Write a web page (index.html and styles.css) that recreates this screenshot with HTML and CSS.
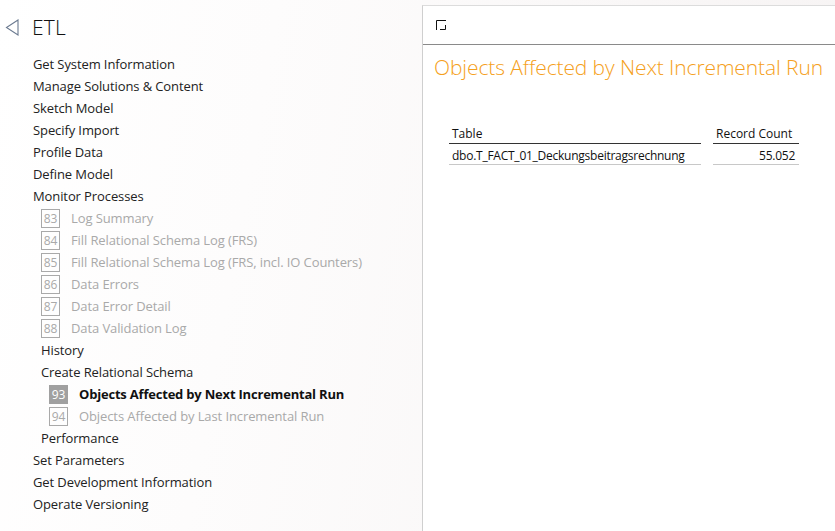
FILE: index.html
```html
<!DOCTYPE html>
<html>
<head>
<meta charset="utf-8">
<link rel="stylesheet" href="styles.css">
</head>
<body>
<div class="app">
  <nav class="side">
    <div class="head">
      <svg class="back" width="14" height="17" viewBox="0 0 14 17"><path d="M13 1 L1.5 8.5 L13 16 Z" fill="none" stroke="#6b7a90" stroke-width="1.1"/></svg>
      <span class="etl">ETL</span>
    </div>
    <ul class="menu">
      <li class="item">Get System Information</li>
      <li class="item">Manage Solutions &amp; Content</li>
      <li class="item">Sketch Model</li>
      <li class="item">Specify Import</li>
      <li class="item">Profile Data</li>
      <li class="item">Define Model</li>
      <li class="item">Monitor Processes</li>
      <li class="item num l1 dim"><span class="box">83</span>Log Summary</li>
      <li class="item num l1 dim"><span class="box">84</span>Fill Relational Schema Log (FRS)</li>
      <li class="item num l1 dim"><span class="box">85</span>Fill Relational Schema Log (FRS, incl. IO Counters)</li>
      <li class="item num l1 dim"><span class="box">86</span>Data Errors</li>
      <li class="item num l1 dim"><span class="box">87</span>Data Error Detail</li>
      <li class="item num l1 dim"><span class="box">88</span>Data Validation Log</li>
      <li class="item l1">History</li>
      <li class="item l1">Create Relational Schema</li>
      <li class="item num l2 active"><span class="box">93</span>Objects Affected by Next Incremental Run</li>
      <li class="item num l2 dim"><span class="box">94</span>Objects Affected by Last Incremental Run</li>
      <li class="item l1">Performance</li>
      <li class="item">Set Parameters</li>
      <li class="item">Get Development Information</li>
      <li class="item">Operate Versioning</li>
    </ul>
  </nav>
  <main class="panel">
    <div class="toolbar">
      <svg width="11" height="11" viewBox="0 0 11 11"><path d="M0.5 10 V0.5 H10 M4 9.5 H9.5 V5" fill="none" stroke="#111" stroke-width="1"/></svg>
    </div>
    <h1 class="title">Objects Affected by Next Incremental Run</h1>
    <div class="table">
      <div class="col">
        <div class="th">Table</div>
        <div class="td">dbo.T_FACT_01_Deckungsbeitragsrechnung</div>
      </div>
      <div class="col col2">
        <div class="th">Record Count</div>
        <div class="td right">55.052</div>
      </div>
    </div>
  </main>
</div>
</body>
</html>
```
FILE: styles.css
```css
* { box-sizing: border-box; }
html, body { margin: 0; padding: 0; }
body {
  width: 835px; height: 531px; overflow: hidden;
  font-family: "Open Sans", "Noto Sans", sans-serif;
  background: linear-gradient(100deg, #ffffff 0%, #fdfcfc 30%, #f6f3f3 100%);
}
.app { display: flex; height: 531px; }
.side { width: 422px; flex: none; }
.head { display: flex; align-items: center; height: 36px; margin-top: 9px; padding-left: 5px; }
.back { margin-right: 13px; }
.etl { font-size: 21px; font-weight: 300; color: #111; letter-spacing: 0.2px; }
.menu { list-style: none; margin: 8px 0 0; padding: 0 0 0 33px; }
.item {
  height: 22px; display: flex; align-items: center;
  font-size: 13px; color: #222; letter-spacing: -0.1px; white-space: nowrap;
}
.l1 { padding-left: 8px; }
.l2 { padding-left: 16px; }
.dim { color: #a9a9a9; }
.box {
  width: 19px; height: 19px; border: 1px solid #a9a9a9;
  display: inline-flex; align-items: center; justify-content: center;
  font-size: 12px; color: #a9a9a9; margin-right: 11px; flex: none; letter-spacing: 0;
}
.active { font-weight: 700; color: #111; letter-spacing: -0.2px; }
.active .box { background: #a0a0a0; border-color: #a0a0a0; color: #fff; font-weight: 400; }
.panel {
  flex: 1; margin-top: 5px; background: #fff;
  border-left: 1px solid #cfcfcf; border-top: 1px solid #dcdcdc;
}
.toolbar { height: 39px; border-bottom: 1px solid #8a8a8a; padding: 14px 0 0 13px; }
.toolbar svg { display: block; }
.title {
  margin: 8px 0 0 11px; font-size: 21px; font-weight: 300; color: #f5a020;
  letter-spacing: -0.1px; white-space: nowrap;
}
.table { display: flex; gap: 12px; margin: 41px 0 0 26px; font-size: 12px; color: #111; }
.col { width: 252px; }
.col2 { width: 86px; }
.th { height: 22px; padding: 3px 0 0 3px; border-bottom: 1px solid #333; white-space: nowrap; }
.td { height: 21px; padding: 3px 0 0 3px; border-bottom: 1px solid #c8c8c8; white-space: nowrap; letter-spacing: -0.25px; }
.right { text-align: right; padding-right: 4px; }
```
